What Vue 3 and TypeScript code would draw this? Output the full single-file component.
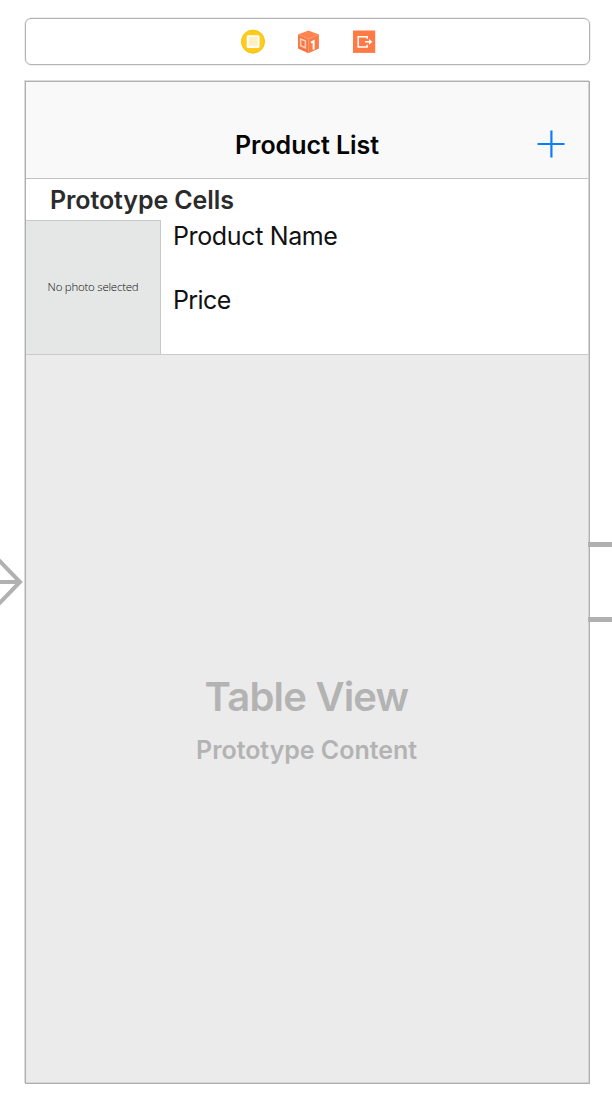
<script setup lang="ts">
const title: string = 'Product List'
const cell = { name: 'Product Name', price: 'Price', placeholder: 'No photo selected' }
</script>

<template>
  <main class="canvas">
    <header class="dock">
      <svg class="icon" viewBox="0 0 24 24">
        <circle cx="13" cy="11.6" r="11.9" fill="#fdcc1c" />
        <circle cx="13" cy="11.6" r="11.3" fill="none" stroke="#f5c41a" stroke-width="1" />
        <rect x="7.6" y="6.2" width="11" height="11" rx="0.6" fill="#fff0c6" stroke="#fff" stroke-width="1.8" />
        <path d="M9 9.5h8M9 12h8M9 14.5h8" stroke="#feebbb" stroke-width="0.6" />
      </svg>
      <svg class="icon" viewBox="0 0 24 24">
        <path d="M12.4 .6 22.9 4.6 12.4 9 2 4.6Z" fill="#ff8550" />
        <path d="M2 4.6 12.4 9V23.2L2 18.4Z" fill="#f47643" />
        <path d="M22.9 4.6 12.4 9V23.2L22.9 18.4Z" fill="#ff7a45" />
        <path d="M2 4.6 12.4 9 22.9 4.6M12.4 9V23" fill="none" stroke="#ff9a70" stroke-width="0.7" />
        <path d="M4.6 9 9.4 10.9V17.8L4.6 15.8Z" fill="none" stroke="#ffc9b2" stroke-width="1.6" />
        <path d="M15 12.6 17.6 11.2V19.6" fill="none" stroke="#fff" stroke-width="2" />
      </svg>
      <svg class="icon" viewBox="0 0 24 24">
        <rect x="1" y="0.5" width="22.2" height="22.4" fill="#ff7a45" />
        <path d="M15.2 8.8V6.7H6.2v10.4h9v-2.3" fill="none" stroke="#fff" stroke-width="1.5" />
        <path d="M13 11.8H18" stroke="#fff" stroke-width="1.5" />
        <path d="M17 8.9 20.4 11.8 17 14.7Z" fill="#fff" />
      </svg>
    </header>

    <section class="scene">
      <nav class="navbar">
        <h1 class="title">{{ title }}</h1>
        <svg class="add" viewBox="0 0 28 28">
          <path d="M.5 14h27M14.4 .5v27" stroke="#0f7cff" stroke-width="2.2" />
        </svg>
      </nav>
      <h2 class="section-title">Prototype Cells</h2>
      <div class="cell">
        <div class="photo"><span>{{ cell.placeholder }}</span></div>
        <div class="details">
          <span class="name">{{ cell.name }}</span>
          <span class="price">{{ cell.price }}</span>
        </div>
      </div>
      <div class="table-body">
        <div class="table-label">Table View</div>
        <div class="table-sub">Prototype Content</div>
      </div>
    </section>

    <svg class="arrow" viewBox="0 0 24 50">
      <path d="M0 25h19M-4 .2 20 25-4 49.8" fill="none" stroke="#b1b1b1" stroke-width="4" />
    </svg>
    <div class="segue"></div>
  </main>
</template>

<style>
body { margin: 0; background: #fff; }
</style>

<style scoped>
.canvas {
  position: relative;
  box-sizing: border-box;
  width: 612px;
  height: 1108px;
  padding: 18px 22px 0 25px;
  overflow: hidden;
  background: #fff;
  font-family: Inter, "Liberation Sans", sans-serif;
  white-space: nowrap;
}
.dock {
  box-sizing: border-box;
  display: flex;
  justify-content: center;
  align-items: center;
  gap: 32px;
  height: 47px;
  border: 1px solid #b3b3b3;
  border-radius: 6px;
  box-shadow: 0 0 0 0.5px #dedede;
}
.icon { width: 24px; height: 24px; overflow: visible; }
.scene {
  position: relative;
  box-sizing: border-box;
  display: flex;
  flex-direction: column;
  height: 1003px;
  margin-top: 16px;
  border: 1px solid #b0b0b0;
  box-shadow: -1px -1px #dcdcdc;
}
.scene::after {
  content: "";
  position: absolute;
  inset: 0;
  box-shadow: inset -1px -1px #d4d4d4;
}
.navbar {
  box-sizing: border-box;
  display: flex;
  height: 97px;
  padding: 46px 24px 0 209px;
  justify-content: space-between;
  background: #f9f9f9;
  border-bottom: 1px solid #c2c2c2;
}
.title { margin: 0; font-size: 25px; line-height: 34px; font-weight: 600; letter-spacing: -0.04px; color: #050505; }
.add { width: 28px; height: 28px; margin-top: 2px; }
.section-title {
  margin: 0;
  height: 41px;
  padding-left: 24px;
  font-size: 25px;
  line-height: 42px;
  font-weight: 600;
  letter-spacing: -0.1px;
  color: #2b2b2b;
}
.cell { box-sizing: border-box; display: flex; height: 135px; border-bottom: 1px solid #cacaca; }
.photo {
  box-sizing: border-box;
  width: 135px;
  height: 134px;
  background: #e4e7e6;
  border-top: 1px solid #c8caca;
  border-right: 1px solid #c8caca;
  text-align: center;
}
.photo span { display: block; padding-top: 57px; font: 300 11.5px/18px "Open Sans", sans-serif; letter-spacing: -0.25px; color: #0c0c0c; }
.details { display: flex; flex-direction: column; gap: 32px; padding-left: 12px; font-size: 25px; line-height: 32px; letter-spacing: -0.36px; color: #111; }
.price { letter-spacing: -0.6px; }
.table-body {
  flex: 1;
  display: flex;
  flex-direction: column;
  align-items: center;
  padding: 317px 2px 0 0;
  background: #ebebeb;
  color: #b3b3b3;
  font-weight: 600;
}
.table-label { font-size: 40px; line-height: 50px; letter-spacing: -0.8px; }
.table-sub { margin-top: 12px; font-size: 25px; line-height: 32px; letter-spacing: -0.05px; }
.arrow { position: absolute; left: 0; top: 557px; width: 24px; height: 50px; }
.segue {
  position: absolute;
  box-sizing: border-box;
  left: 588px;
  top: 542px;
  width: 24px;
  height: 80px;
  border: solid #b0b0b0;
  border-width: 5px 0;
}
</style>
